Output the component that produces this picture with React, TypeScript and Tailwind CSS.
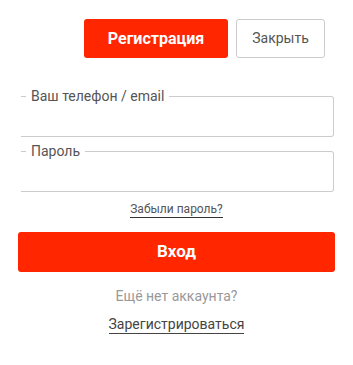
export default function App() {
  return (
    <div className="w-[353px] h-[365px] bg-white" style={{ fontFamily: "Roboto, 'Liberation Sans', sans-serif" }}>
      <div className="flex justify-end gap-2 pt-[19px] pr-[28px]">
        <button className="w-[144px] h-[39px] rounded-[3px] bg-[#ff2600] text-white text-[16px] font-bold">Регистрация</button>
        <button className="w-[89px] h-[39px] rounded-[3px] border border-[#cccccc] bg-white text-[#555555] text-[14px]">Закрыть</button>
      </div>
      <div className="pl-[21px] pr-[19px] pt-[30px]">
        <fieldset className="border border-l-0 border-[#cccccc] rounded-r-[3px]">
          <legend className="ml-[5px] px-[5px] text-[14px] leading-[16px] text-[#555555]">Ваш телефон / email</legend>
          <div className="h-[32px]" />
        </fieldset>
        <fieldset className="mt-[6px] border border-l-0 border-[#cccccc] rounded-r-[3px]">
          <legend className="ml-[5px] px-[5px] text-[14px] leading-[16px] text-[#555555]">Пароль</legend>
          <div className="h-[32px]" />
        </fieldset>
      </div>
      <div className="flex justify-center mt-[10px]">
        <a className="text-[12px] leading-[15px] text-[#555555] border-b border-[#333333]">Забыли пароль?</a>
      </div>
      <div className="px-[18px] mt-[14px]">
        <button className="w-full h-[40px] rounded-[3px] bg-[#ff2600] text-white text-[17px] font-bold">Вход</button>
      </div>
      <div className="text-center mt-[16px] text-[14px] leading-[16px] text-[#999999]">Ещё нет аккаунта?</div>
      <div className="flex justify-center mt-[11px]">
        <a className="text-[14px] leading-[18px] text-[#444444] border-b border-[#444444]">Зарегистрироваться</a>
      </div>
    </div>
  );
}
